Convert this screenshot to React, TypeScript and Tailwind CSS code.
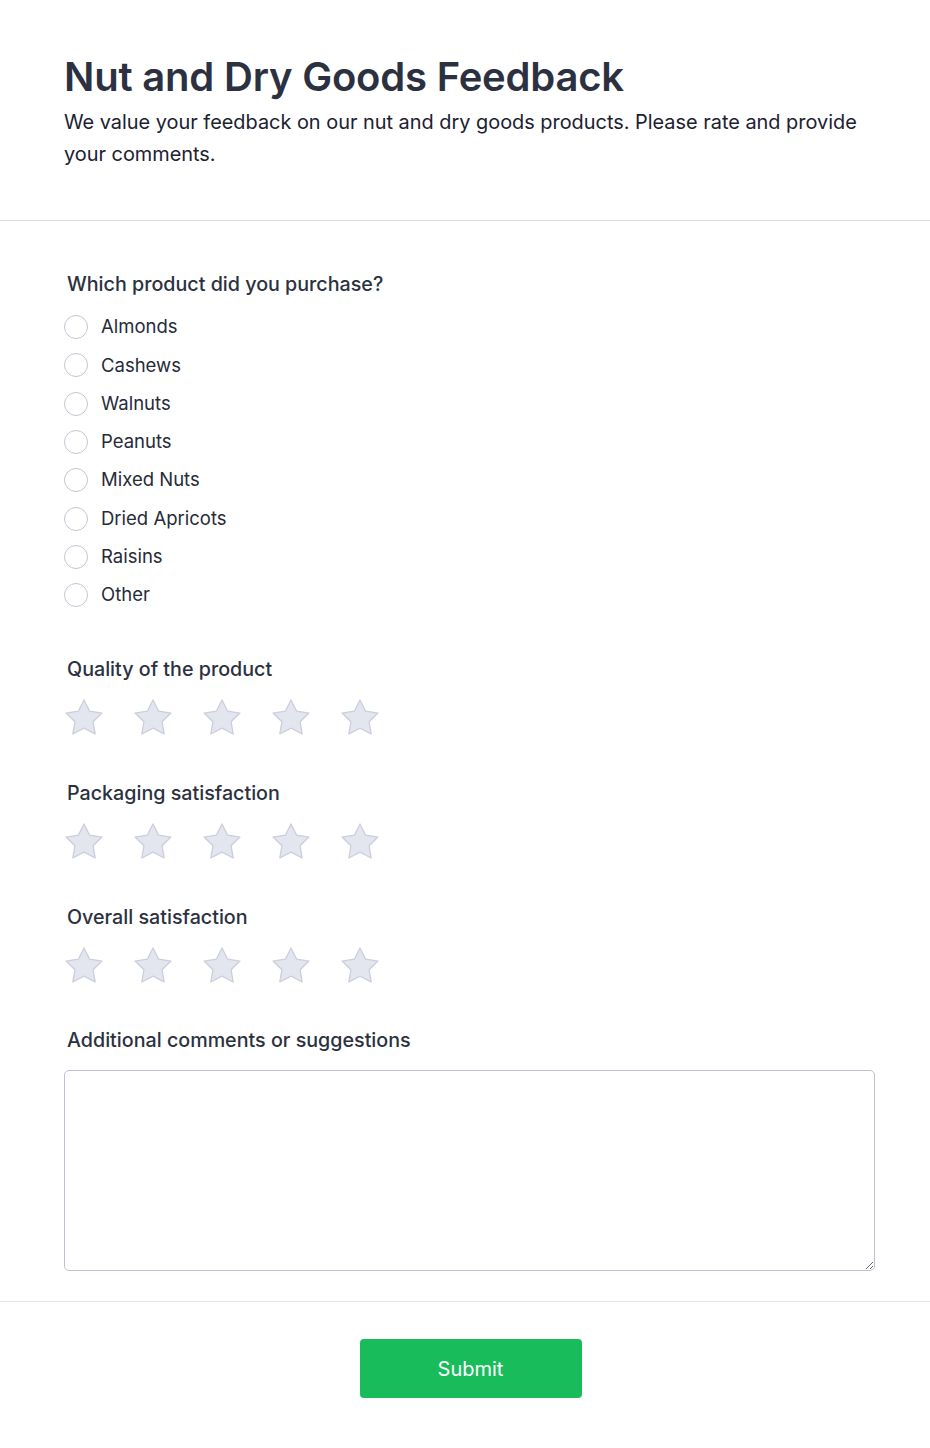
const PRODUCTS = [
  "Almonds",
  "Cashews",
  "Walnuts",
  "Peanuts",
  "Mixed Nuts",
  "Dried Apricots",
  "Raisins",
  "Other",
];

const RATINGS = [
  "Quality of the product",
  "Packaging satisfaction",
  "Overall satisfaction",
];

function Star() {
  return (
    <svg width="44" height="44" viewBox="0 0 24 24">
      <path
        d="M12 2.2l3.09 6.1 6.71.98-4.86 4.73 1.15 6.69L12 17.55l-6.09 3.15 1.15-6.69L2.2 9.28l6.71-.98z"
        fill="#e3e5ef"
        stroke="#cbcedc"
        strokeWidth="0.7"
        strokeLinejoin="round"
      />
    </svg>
  );
}

export default function App() {
  return (
    <div className="min-h-[1448px] bg-white text-[#2c3140]" style={{ fontFamily: "Inter, 'Noto Sans', sans-serif" }}>
      {/* Header */}
      <header className="px-[64px] pt-[52px] pb-[50px] border-b border-[#dcdce6]">
        <h1 className="text-[40px] font-semibold leading-[50px] tracking-[-0.2px] text-[#2b3140]">
          Nut and Dry Goods Feedback
        </h1>
        <p className="mt-[4px] text-[19.9px] leading-[32px] text-[#1c2130]">
          We value your feedback on our nut and dry goods products. Please rate and provide your comments.
        </p>
      </header>

      {/* Questions */}
      <main className="ml-[64px] w-[811px] pt-[49px] pb-[30px]">
        <section>
          <h2 className="pl-[3px] text-[19.7px] font-medium leading-[28px]">Which product did you purchase?</h2>
          <ul className="mt-[10px] flex flex-col">
            {PRODUCTS.map((p) => (
              <li key={p} className="flex items-center h-[38.3px] gap-[13px]">
                <span className="w-[24px] h-[24px] rounded-full border-[1.5px] border-[#c3c6d3] bg-white" />
                <span className="text-[18.5px] text-[#262b38]">{p}</span>
              </li>
            ))}
          </ul>
        </section>

        {RATINGS.map((r, idx) => (
          <section key={r} className={idx === 0 ? "mt-[41px]" : "mt-[39px]"}>
            <h2 className="pl-[3px] text-[19.7px] font-medium leading-[28px]">{r}</h2>
            <div className="mt-[13px] -ml-[2px] flex gap-[25px]">
              {[0, 1, 2, 3, 4].map((i) => (
                <Star key={i} />
              ))}
            </div>
          </section>
        ))}

        <section className="mt-[38px]">
          <h2 className="pl-[3px] text-[19.7px] font-medium leading-[28px]">Additional comments or suggestions</h2>
          <textarea className="mt-[16px] block w-full h-[201px] rounded-[5px] border border-[#bfc1d2] outline-none" />
        </section>
      </main>

      {/* Footer */}
      <footer className="border-t border-[#e6e6ee] pt-[37px]">
        <div className="ml-[65px] w-[811px] flex justify-center">
          <button className="w-[222px] h-[59px] rounded-[4px] bg-[#19bc5b] text-white text-[20px]">
            Submit
          </button>
        </div>
      </footer>
    </div>
  );
}
